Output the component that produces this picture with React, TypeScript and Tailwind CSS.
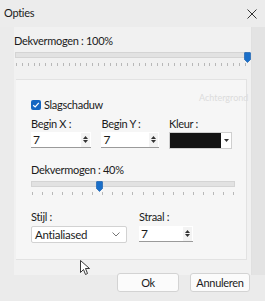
import React from "react";

function Ticks({ count }: { count: number }) {
  return (
    <div className="flex justify-between h-[3px] mt-[5px] px-[1px]">
      {Array.from({ length: count }).map((_, i) => (
        <div key={i} className="w-px h-[3px] bg-[#b8b8b8]" />
      ))}
    </div>
  );
}

function Slider({ pct, ticks }: { pct: number; ticks: number }) {
  return (
    <div className="relative">
      <div className="h-[6px] bg-[#e2e2e2] border border-[#d4d4d4] mt-[4px]" />
      <div
        className="absolute top-[0px] -ml-[3px]"
        style={{ left: `${pct}%` }}
      >
        <svg width="7" height="11" viewBox="0 0 7 11">
          <path d="M0.5 1 Q0.5 0.5 1 0.5 H6 Q6.5 0.5 6.5 1 V7.5 L3.5 10.5 L0.5 7.5 Z" fill="#1a6fc9" stroke="#0b55a8" strokeWidth="0.6" />
        </svg>
      </div>
      <Ticks count={ticks} />
    </div>
  );
}

function Spin({ w }: { w: string }) {
  return (
    <div className={`${w} h-[16px] bg-white border-b border-[#9a9a9a] flex items-center justify-between pl-[2px] pr-[1px]`}>
      <span className="leading-none text-[12px]">7</span>
      <div className="flex flex-col gap-[1px] w-[9px] h-[14px] bg-[#f3f3f3] items-center justify-center">
        <svg width="5" height="3" viewBox="0 0 5 3"><path d="M0 3 L2.5 0 L5 3Z" fill="#333" /></svg>
        <svg width="5" height="3" viewBox="0 0 5 3"><path d="M0 0 L2.5 3 L5 0Z" fill="#333" /></svg>
      </div>
    </div>
  );
}

export default function App() {
  return (
    <div className="relative w-[265px] h-[301px] overflow-hidden bg-[#ebebeb] text-[#1b1b1b] font-['Lato','Noto_Sans',sans-serif] text-[11px] tracking-[-0.3px]">
      {/* title bar */}
      <div className="h-[27px] flex items-center justify-between pl-[4px] pr-[8px] bg-[#ececec]">
        <span>Opties</span>
        <svg width="10" height="10" viewBox="0 0 10 10"><path d="M0.5 0.5 L9.5 9.5 M9.5 0.5 L0.5 9.5" stroke="#333" strokeWidth="1" /></svg>
      </div>

      <div className="flex">
        <div className="w-[14px]" />
        <div className="w-[238px] bg-[#f1f1f1] border-r border-[#e0e0e0] h-[248px] pt-[7px]">
          <div className="pl-[0px] pr-[4px]">
            <div className="leading-[14px]">Dekvermogen : 100%</div>
            <div className="pl-[1px]">
              <Slider pct={100} ticks={40} />
            </div>
          </div>
          <div className="mt-[13px] ml-[2px] mr-[4px] h-[181px] bg-[#f6f6f6] border-t border-b border-r border-[#e2e2e2] pl-[15px] pr-[14px] pt-[18px]">
            <div className="flex items-center gap-[3px]">
              <div className="w-[10px] h-[10px] rounded-[2px] bg-[#1466c2] flex items-center justify-center">
                <svg width="8" height="8" viewBox="0 0 8 8"><path d="M1.2 4.2 L3.2 6 L6.8 1.8" stroke="white" strokeWidth="1.2" fill="none" /></svg>
              </div>
              <span className="leading-[14px]">Slagschaduw</span>
            </div>
            <div className="flex mt-[5px]">
              <div className="w-[71px]">
                <div className="leading-[14px]">Begin X :</div>
                <div className="mt-[1px]"><Spin w="w-[60px]" /></div>
              </div>
              <div className="w-[68px]">
                <div className="leading-[14px]">Begin Y :</div>
                <div className="mt-[1px]"><Spin w="w-[58px]" /></div>
              </div>
              <div>
                <div className="leading-[14px]">Kleur :</div>
                <div className="mt-[1px] flex h-[17px] w-[63px] border border-[#cfcfcf] bg-white">
                  <div className="w-[51px] bg-[#141414]" />
                  <div className="flex-1 flex items-center justify-center">
                    <svg width="5" height="3" viewBox="0 0 5 3"><path d="M0 0 L2.5 3 L5 0Z" fill="#333" /></svg>
                  </div>
                </div>
              </div>
            </div>
            <div className="mt-[14px] leading-[14px]">Dekvermogen : 40%</div>
            <div className="w-[204px]">
              <Slider pct={33.5} ticks={21} />
            </div>
            <div className="flex mt-[15px]">
              <div className="w-[108px]">
                <div className="leading-[14px]">Stijl :</div>
                <div className="mt-[2px] w-[96px] h-[17px] bg-white border border-[#d2d2d2] rounded-[2px] flex items-center justify-between pl-[3px] pr-[6px]">
                  <span className="leading-none text-[11.5px]">Antialiased</span>
                  <svg width="8" height="5" viewBox="0 0 8 5"><path d="M0.5 0.5 L4 4 L7.5 0.5" stroke="#666" strokeWidth="0.9" fill="none" /></svg>
                </div>
              </div>
              <div>
                <div className="leading-[14px]">Straal :</div>
                <div className="mt-[2px]"><Spin w="w-[54px]" /></div>
              </div>
            </div>
          </div>
        </div>
        <div className="flex-1 bg-[#e3e3e3] h-[248px]" />
      </div>

      <div className="flex justify-end gap-[11px] pr-[15px] mt-[-2px]">
        <button className="w-[62px] h-[19px] bg-[#fbfbfb] border border-[#d3d3d3] rounded-[3px] leading-none">Ok</button>
        <button className="w-[60px] h-[19px] bg-[#fbfbfb] border border-[#d3d3d3] rounded-[3px] leading-none">Annuleren</button>
      </div>

      {/* faint background window text */}
      <div className="absolute left-[199px] top-[91px] text-[#dcdcdc] text-[9px] tracking-normal pointer-events-none">Achtergrond</div>

      {/* mouse cursor */}
      <svg className="absolute left-[80px] top-[260px]" width="10" height="16" viewBox="0 0 10 16">
        <path d="M0.5 0.5 V12.5 L3.5 9.5 L5.5 14.5 L7.5 13.5 L5.5 8.5 H9.5 Z" fill="white" stroke="#222" strokeWidth="0.9" />
      </svg>
    </div>
  );
}
